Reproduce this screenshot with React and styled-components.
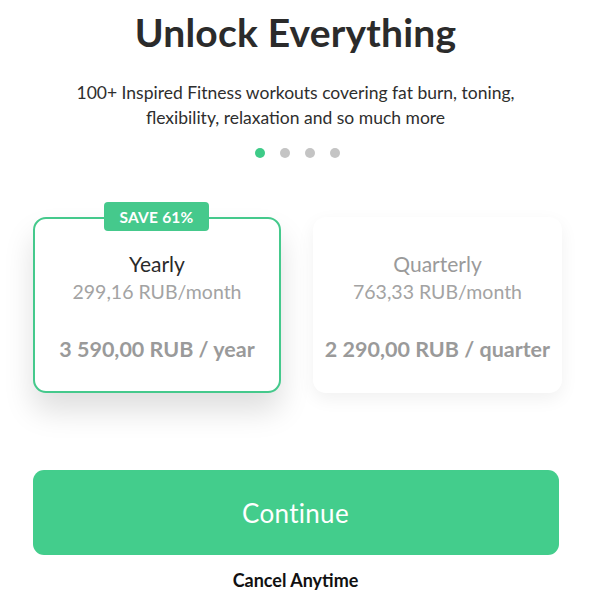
import React from "react";
import styled, { createGlobalStyle } from "styled-components";

const Global = createGlobalStyle`
  html, body { margin: 0; padding: 0; background: #fff; }
  body { font-family: Lato, "Open Sans", sans-serif; -webkit-font-smoothing: antialiased; }
`;

const Page = styled.div`
  width: 591px;
  height: 603px;
  display: flex;
  flex-direction: column;
  align-items: center;
  overflow: hidden;
`;

const Title = styled.h1`
  margin: 7px 0 0;
  font-size: 39px;
  font-weight: 700;
  color: #2b2b2b;
  line-height: 50px;
  letter-spacing: 0.2px;
`;

const Subtitle = styled.p`
  margin: 23px 0 0;
  font-size: 17.5px;
  line-height: 25px;
  color: #2e2e2e;
  text-align: center;
  width: 460px;
`;

const Dots = styled.div`
  display: flex;
  gap: 15px;
  margin-top: 18px;
  margin-left: 4px;
`;

const Dot = styled.span`
  width: 10px;
  height: 10px;
  border-radius: 50%;
  background: ${(p) => (p.$active ? "#3ecb88" : "#c4c4c4")};
`;

const Plans = styled.div`
  display: flex;
  gap: 32px;
  margin-top: 59px;
  align-self: flex-start;
  padding-left: 33px;
`;

const Card = styled.div`
  position: relative;
  box-sizing: border-box;
  width: ${(p) => (p.$selected ? 248 : 249)}px;
  height: 176px;
  border-radius: 13px;
  background: #fff;
  border: 2px solid ${(p) => (p.$selected ? "#45c98c" : "transparent")};
  box-shadow: ${(p) =>
    p.$selected
      ? "0 18px 30px rgba(0,0,0,0.13)"
      : "0 6px 18px rgba(0,0,0,0.06)"};
  display: flex;
  flex-direction: column;
  align-items: center;
  padding-top: 32px;
`;

const Badge = styled.div`
  position: absolute;
  top: -17px;
  left: 69px;
  width: 105px;
  height: 29px;
  border-radius: 4px;
  background: #45c98c;
  color: #fff;
  font-size: 15.5px;
  font-weight: 700;
  display: flex;
  align-items: center;
  justify-content: center;
  letter-spacing: 0.2px;
`;

const PlanName = styled.div`
  font-size: 21px;
  line-height: 26px;
  color: ${(p) => (p.$selected ? "#2a2a2a" : "#9a9a9a")};
`;

const Monthly = styled.div`
  margin-top: 2px;
  font-size: 19.5px;
  line-height: 26px;
  color: #a3a3a3;
`;

const Total = styled.div`
  margin-top: 31px;
  font-size: 21.5px;
  font-weight: 700;
  line-height: 26px;
  color: #9a9a9a;
`;

const Button = styled.button`
  margin-top: 77px;
  width: 526px;
  height: 85px;
  border: none;
  border-radius: 11px;
  background: #43cd8c;
  color: #fff;
  font-family: inherit;
  font-size: 26px;
  font-weight: 400;
  letter-spacing: 0.3px;
`;

const Cancel = styled.div`
  margin-top: 14px;
  font-size: 18px;
  font-weight: 700;
  color: #111;
`;

export default function App() {
  return (
    <Page>
      <Global />
      <Title>Unlock Everything</Title>
      <Subtitle>
        100+ Inspired Fitness workouts covering fat burn, toning, flexibility,
        relaxation and so much more
      </Subtitle>
      <Dots>
        <Dot $active />
        <Dot />
        <Dot />
        <Dot />
      </Dots>
      <Plans>
        <Card $selected>
          <Badge>SAVE 61%</Badge>
          <PlanName $selected>Yearly</PlanName>
          <Monthly>299,16 RUB/month</Monthly>
          <Total>3 590,00 RUB / year</Total>
        </Card>
        <Card>
          <PlanName>Quarterly</PlanName>
          <Monthly>763,33 RUB/month</Monthly>
          <Total>2 290,00 RUB / quarter</Total>
        </Card>
      </Plans>
      <Button>Continue</Button>
      <Cancel>Cancel Anytime</Cancel>
    </Page>
  );
}
